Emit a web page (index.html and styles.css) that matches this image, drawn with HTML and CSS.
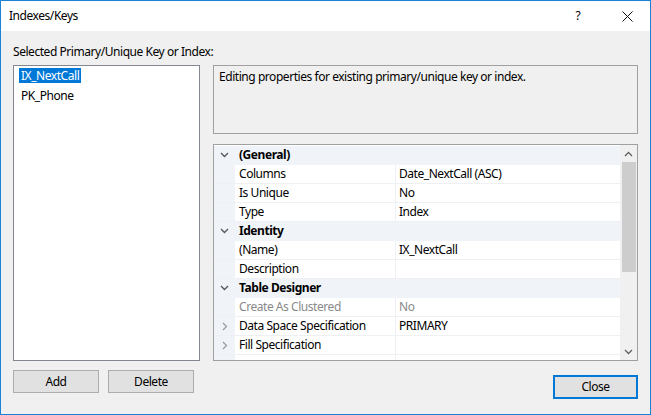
FILE: index.html
```html
<!DOCTYPE html>
<html>
<head>
<meta charset="utf-8">
<link rel="stylesheet" href="styles.css">
</head>
<body>
<div class="window">
  <div class="titlebar">
    <span class="title">Indexes/Keys</span>
    <span class="help">?</span>
    <span class="closex"><svg width="11" height="11" viewBox="0 0 11 11"><path d="M0.5 0.5 L10.5 10.5 M10.5 0.5 L0.5 10.5" stroke="#111" stroke-width="1" fill="none"/></svg></span>
  </div>
  <div class="body">
    <div class="label">Selected Primary/Unique Key or Index:</div>
    <div class="main">
      <div class="list">
        <div class="item"><span class="sel">IX_NextCall</span></div>
        <div class="item"><span class="txt">PK_Phone</span></div>
      </div>
      <div class="right">
        <div class="desc">Editing properties for existing primary/unique key or index.</div>
        <div class="grid">
          <div class="rows">
            <div class="row cat"><span class="gut"><svg width="9" height="6" viewBox="0 0 9 6"><path d="M1 1 L4.5 4.5 L8 1" stroke="#555" stroke-width="1.3" fill="none"/></svg></span><span class="catname">(General)</span></div>
            <div class="row"><span class="gut"></span><span class="name">Columns</span><span class="value">Date_NextCall (ASC)</span></div>
            <div class="row"><span class="gut"></span><span class="name">Is Unique</span><span class="value">No</span></div>
            <div class="row"><span class="gut"></span><span class="name">Type</span><span class="value">Index</span></div>
            <div class="row cat"><span class="gut"><svg width="9" height="6" viewBox="0 0 9 6"><path d="M1 1 L4.5 4.5 L8 1" stroke="#555" stroke-width="1.3" fill="none"/></svg></span><span class="catname">Identity</span></div>
            <div class="row"><span class="gut"></span><span class="name">(Name)</span><span class="value">IX_NextCall</span></div>
            <div class="row"><span class="gut"></span><span class="name">Description</span><span class="value"></span></div>
            <div class="row cat"><span class="gut"><svg width="9" height="6" viewBox="0 0 9 6"><path d="M1 1 L4.5 4.5 L8 1" stroke="#555" stroke-width="1.3" fill="none"/></svg></span><span class="catname">Table Designer</span></div>
            <div class="row dim"><span class="gut"></span><span class="name">Create As Clustered</span><span class="value">No</span></div>
            <div class="row"><span class="gut"><svg width="6" height="9" viewBox="0 0 6 9"><path d="M1 1 L4.5 4.5 L1 8" stroke="#999" stroke-width="1.2" fill="none"/></svg></span><span class="name">Data Space Specification</span><span class="value">PRIMARY</span></div>
            <div class="row"><span class="gut"><svg width="6" height="9" viewBox="0 0 6 9"><path d="M1 1 L4.5 4.5 L1 8" stroke="#999" stroke-width="1.2" fill="none"/></svg></span><span class="name">Fill Specification</span><span class="value"></span></div>
            <div class="row"><span class="gut"></span><span class="name"></span><span class="value"></span></div>
          </div>
          <div class="scrollbar">
            <div class="sbtn"><svg width="9" height="6" viewBox="0 0 9 6"><path d="M1 5 L4.5 1.5 L8 5" stroke="#606060" stroke-width="1.3" fill="none"/></svg></div>
            <div class="track"><div class="thumb"></div></div>
            <div class="sbtn"><svg width="9" height="6" viewBox="0 0 9 6"><path d="M1 1 L4.5 4.5 L8 1" stroke="#606060" stroke-width="1.3" fill="none"/></svg></div>
          </div>
        </div>
      </div>
    </div>
    <div class="buttons">
      <div class="btn">Add</div>
      <div class="btn">Delete</div>
      <div class="spacer"></div>
      <div class="btn primary">Close</div>
    </div>
  </div>
</div>
</body>
</html>
```

FILE: styles.css
```css
* { box-sizing: border-box; }
html, body { margin: 0; padding: 0; }
body {
  font-family: "Noto Sans", "Open Sans", sans-serif;
  font-size: 12px;
  letter-spacing: -0.45px;
  color: #000;
  background: #f0f0f0;
}
.window {
  width: 651px;
  height: 415px;
  border: 1px solid #1883d7;
  background: #f0f0f0;
  display: flex;
  flex-direction: column;
}
.titlebar {
  height: 30px;
  background: #fff;
  display: flex;
  align-items: center;
  padding-left: 8px;
  line-height: 30px;
}
.title { flex: 1; }
.help { width: 40px; text-align: center; margin-right: 6px; }
.closex { width: 46px; display: flex; justify-content: center; align-items: center; margin-right: 0; }
.body {
  flex: 1;
  padding: 13px 12px 0 12px;
  display: flex;
  flex-direction: column;
}
.label { height: 15px; line-height: 15px; margin-bottom: 6px; }
.main { display: flex; gap: 13px; height: 296px; }
.list {
  width: 187px;
  background: #fff;
  border: 1px solid #828790;
  padding: 2px 5px;
}
.item { height: 20px; line-height: 15px; }
.item span { display: inline-block; padding: 0 2px; height: 15px; }
.sel { background: #0078d7; color: #fff; }
.right { flex: 1; display: flex; flex-direction: column; gap: 10px; }
.desc {
  height: 69px;
  border: 1px solid #a0a0a0;
  background: #f0f0f0;
  padding: 3px 5px;
  line-height: 15px;
}
.grid {
  flex: 1;
  border: 1px solid #a0a0a0;
  background: #fff;
  display: flex;
  overflow: hidden;
}
.rows { flex: 1; padding-top: 1px; overflow: hidden; }
.row {
  display: flex;
  height: 19px;
  line-height: 18px;
  border-bottom: 1px solid #eef0f4;
}
.gut {
  width: 21px;
  flex: none;
  background: #f0f3f8;
  display: flex;
  align-items: center;
  justify-content: center;
}
.row.cat { background: #f0f3f8; border-bottom-color: #f0f3f8; }
.catname { font-weight: bold; padding-left: 4px; }
.name {
  width: 161px;
  flex: none;
  padding-left: 4px;
  border-right: 1px solid #eef0f4;
  white-space: nowrap;
}
.value { flex: 1; padding-left: 3px; white-space: nowrap; }
.row.dim .name, .row.dim .value { color: #8a8a8a; }
.scrollbar {
  width: 17px;
  background: #f0f0f0;
  display: flex;
  flex-direction: column;
}
.sbtn { height: 17px; display: flex; align-items: center; justify-content: center; }
.track { flex: 1; padding: 0 1px 0 2px; }
.thumb { height: 110px; background: #cdcdcd; }
.buttons { display: flex; align-items: flex-start; gap: 9px; margin-top: 9px; }
.btn {
  width: 86px;
  height: 23px;
  line-height: 21px;
  text-align: center;
  background: #e1e1e1;
  border: 1px solid #adadad;
}
.spacer { flex: 1; }
.btn.primary {
  width: 85px;
  height: 24px;
  line-height: 20px;
  border: 2px solid #0078d7;
  margin-top: 5px;
}
```
